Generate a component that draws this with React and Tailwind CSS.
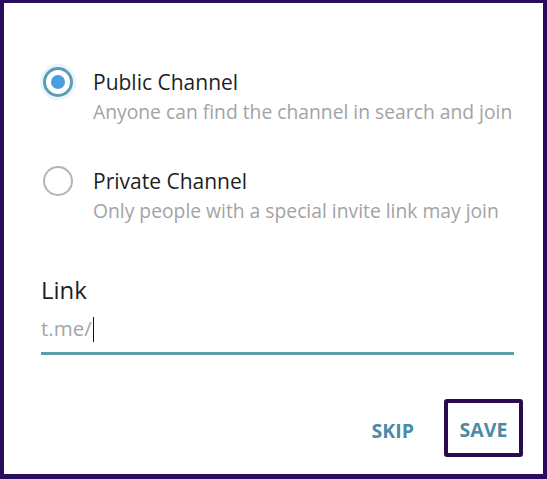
import React from "react";

function Radio({ checked }) {
  if (checked) {
    return (
      <div className="w-[36px] h-[36px] rounded-full bg-[#eaf5fb] flex items-center justify-center shrink-0">
        <div className="w-[30px] h-[30px] rounded-full border-[3px] border-[#5b9db2] bg-white flex items-center justify-center">
          <div className="w-[14px] h-[14px] rounded-full bg-[#4a9de0]" />
        </div>
      </div>
    );
  }
  return (
    <div className="w-[36px] h-[36px] flex items-center justify-center shrink-0">
      <div className="w-[30px] h-[30px] rounded-full border-[2.5px] border-[#b4b4b4] bg-white" />
    </div>
  );
}

function Option({ checked, title, subtitle }) {
  return (
    <div className="flex items-start">
      <div className="mt-[-5px]">
        <Radio checked={checked} />
      </div>
      <div className="ml-[17px] flex flex-col">
        <div className="text-[21px] leading-[26px] text-[#1e1e1e]">{title}</div>
        <div className="mt-[4px] text-[19.3px] leading-[26px] text-[#a3a3a3]">{subtitle}</div>
      </div>
    </div>
  );
}

export default function App() {
  return (
    <div
      className="w-[547px] h-[479px] bg-[#2a0c5c] pt-[3px] pl-[4px] pr-[4px] pb-[5px]"
      style={{ fontFamily: '"Open Sans", "Noto Sans", sans-serif' }}
    >
      <div className="w-full h-full bg-white flex flex-col">
        <div className="pl-[36px] pt-[66px] flex flex-col gap-[43px]">
          <Option
            checked
            title="Public Channel"
            subtitle="Anyone can find the channel in search and join"
          />
          <Option
            title="Private Channel"
            subtitle="Only people with a special invite link may join"
          />
        </div>
        <div className="pl-[37px] pr-[29px] mt-[51px] flex flex-col">
          <div className="text-[24px] leading-[30px] text-[#1e1e1e]">Link</div>
          <div className="mt-[9px] h-[28px] flex items-center">
            <span className="text-[20.5px] leading-[26px] text-[#a6a6a6]">t.me/</span>
            <span className="ml-[1px] w-[1.5px] h-[25px] bg-[#111] mt-[3px]" />
          </div>
          <div className="mt-[10px] h-[2.5px] bg-[#5c9cab]" />
        </div>
        <div className="mt-auto flex justify-end items-center pr-[20px] pb-[17px] gap-[30px]">
          <span className="text-[19.5px] font-bold text-[#4a8ba8] mt-[6px]">SKIP</span>
          <div className="w-[79px] h-[58px] border-[4px] border-[#2a0c4e] rounded-[3px] flex items-center justify-center">
            <span className="text-[19.5px] font-bold text-[#4a8ba8] mt-[4px]">SAVE</span>
          </div>
        </div>
      </div>
    </div>
  );
}
